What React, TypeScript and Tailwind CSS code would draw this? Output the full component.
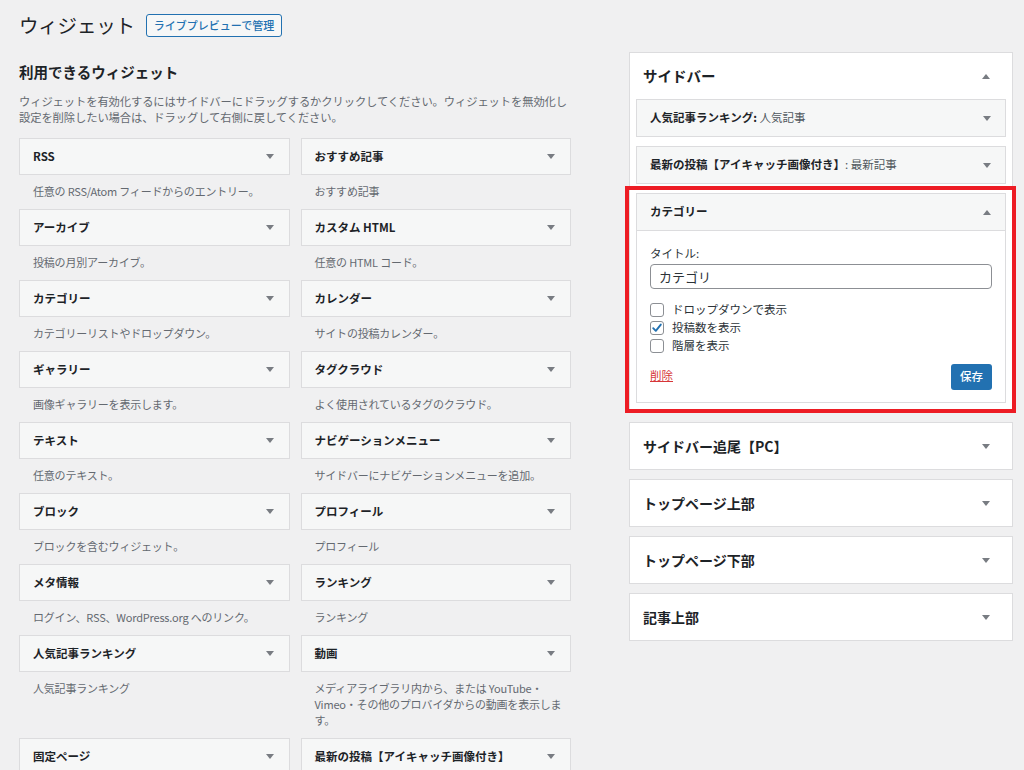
import React from 'react';

const FONT = { fontFamily: '"Noto Sans CJK JP", "Noto Sans", "Liberation Sans", sans-serif' };

const widgets: { title: string; desc: React.ReactNode }[][] = [
  [
    { title: 'RSS', desc: '任意の RSS/Atom フィードからのエントリー。' },
    { title: 'おすすめ記事', desc: 'おすすめ記事' },
  ],
  [
    { title: 'アーカイブ', desc: '投稿の月別アーカイブ。' },
    { title: 'カスタム HTML', desc: '任意の HTML コード。' },
  ],
  [
    { title: 'カテゴリー', desc: 'カテゴリーリストやドロップダウン。' },
    { title: 'カレンダー', desc: 'サイトの投稿カレンダー。' },
  ],
  [
    { title: 'ギャラリー', desc: '画像ギャラリーを表示します。' },
    { title: 'タグクラウド', desc: 'よく使用されているタグのクラウド。' },
  ],
  [
    { title: 'テキスト', desc: '任意のテキスト。' },
    { title: 'ナビゲーションメニュー', desc: 'サイドバーにナビゲーションメニューを追加。' },
  ],
  [
    { title: 'ブロック', desc: 'ブロックを含むウィジェット。' },
    { title: 'プロフィール', desc: 'プロフィール' },
  ],
  [
    { title: 'メタ情報', desc: 'ログイン、RSS、WordPress.org へのリンク。' },
    { title: 'ランキング', desc: 'ランキング' },
  ],
  [
    { title: '人気記事ランキング', desc: '人気記事ランキング' },
    {
      title: '動画',
      desc: (
        <>
          メディアライブラリ内から、または YouTube・
          <br />
          Vimeo・その他のプロバイダからの動画を表示しま
          <br />
          す。
        </>
      ),
    },
  ],
  [
    { title: '固定ページ', desc: '' },
    { title: '最新の投稿【アイキャッチ画像付き】', desc: '' },
  ],
];

const Arrow = ({ up = false }: { up?: boolean }) => (
  <svg width="8" height="5" viewBox="0 0 8 5" className="shrink-0">
    {up ? <path d="M0 5 L4 0 L8 5 Z" fill="#787c82" /> : <path d="M0 0 L8 0 L4 5 Z" fill="#787c82" />}
  </svg>
);

const Tile = ({ title, desc }: { title: string; desc: React.ReactNode }) => (
  <div>
    <div className="h-[37px] bg-[#f6f7f7] border border-[#dcdcde] flex items-center justify-between pl-[13px] pr-[15px]">
      <span className="text-[11.5px] font-bold text-[#1d2327]">{title}</span>
      <Arrow />
    </div>
    {desc !== '' && (
      <div className="pt-[8px] pb-[10px] pl-[14px] text-[11px] leading-[16px] text-[#646970] whitespace-nowrap tracking-[-0.2px]">
        {desc}
      </div>
    )}
  </div>
);

const SideWidget = ({ bold, rest }: { bold: string; rest?: string }) => (
  <div className="h-[38px] bg-[#f6f7f7] border border-[#dcdcde] flex items-center justify-between pl-[13px] pr-[14px]">
    <span className="text-[11.5px] text-[#1d2327]">
      <span className="font-bold">{bold}</span>
      {rest && <span className="text-[#50575e]">{rest}</span>}
    </span>
    <Arrow />
  </div>
);

const Area = ({ title }: { title: string }) => (
  <div className="h-[48px] bg-white border border-[#dcdcde] flex items-center justify-between pl-[13px] pr-[22px]">
    <span className="text-[14px] font-bold text-[#1d2327]">{title}</span>
    <Arrow />
  </div>
);

const Checkbox = ({ checked, label }: { checked?: boolean; label: string }) => (
  <label className="flex items-center gap-[8px] h-[18px]">
    <span className="w-[14px] h-[14px] rounded-[3px] border border-[#8c8f94] bg-white flex items-center justify-center">
      {checked && (
        <svg width="12" height="12" viewBox="0 0 12 12">
          <path d="M2.2 6.2 L4.8 8.8 L9.8 2.6" stroke="#2271b1" strokeWidth="1.9" fill="none" strokeLinecap="round" strokeLinejoin="round" />
        </svg>
      )}
    </span>
    <span className="text-[11.5px] text-[#2c3338]">{label}</span>
  </label>
);

export default function App() {
  return (
    <div className="w-[1024px] h-[770px] overflow-hidden bg-[#f0f0f1] pl-[19px]" style={FONT}>
      <div className="h-[52px] pt-[11px]">
        <div className="h-[28px] flex items-center gap-[11px]">
          <h1 className="text-[19.5px] font-normal text-[#1d2327] leading-[28px] tracking-[-0.2px]">ウィジェット</h1>
          <span className="h-[23px] px-[7px] flex items-center border border-[#2271b1] rounded-[3px] bg-[#f6f7f7] text-[11px] font-medium text-[#2271b1]">
            ライブプレビューで管理
          </span>
        </div>
      </div>

      <div className="flex items-start">
        <div className="w-[552px] shrink-0">
          <h2 className="mt-[10px] text-[14.5px] font-bold leading-[20px] text-[#1d2327]">利用できるウィジェット</h2>
          <p className="mt-[11px] text-[11.3px] leading-[16px] text-[#646970] whitespace-nowrap tracking-[-0.1px]">
            ウィジェットを有効化するにはサイドバーにドラッグするかクリックしてください。ウィジェットを無効化し
            <br />
            設定を削除したい場合は、ドラッグして右側に戻してください。
          </p>
          <div className="mt-[13px] grid grid-cols-2 gap-x-[11px] items-start">
            {widgets.flat().map((w, i) => (
              <Tile key={i} title={w.title} desc={w.desc} />
            ))}
          </div>
        </div>

        <div className="ml-[58px] w-[384px] shrink-0">
          <div className="bg-white border border-[#dcdcde] px-[6px] pb-[9px]">
            <div className="h-[46px] flex items-center justify-between pl-[7px] pr-[16px]">
              <span className="text-[14.5px] font-bold text-[#1d2327]">サイドバー</span>
              <Arrow up />
            </div>
            <div className="flex flex-col gap-[8px]">
              <SideWidget bold="人気記事ランキング:" rest=" 人気記事" />
              <div className="mt-[1px]">
                <SideWidget bold="最新の投稿【アイキャッチ画像付き】" rest=": 最新記事" />
              </div>
              <div className="relative mt-[1px]">
                <div className="border border-[#dcdcde]">
                  <div className="h-[37px] bg-[#f6f7f7] border-b border-[#dcdcde] flex items-center justify-between pl-[13px] pr-[14px]">
                    <span className="text-[11.5px] font-bold text-[#1d2327]">カテゴリー</span>
                    <Arrow up />
                  </div>
                  <div className="bg-white px-[13px] pt-[13px] pb-[12px]">
                    <div className="text-[11.5px] text-[#2c3338] leading-[18px]">タイトル:</div>
                    <div className="mt-[2px] h-[25px] border border-[#8c8f94] rounded-[4px] flex items-center pl-[8px] text-[13px] text-[#2c3338]">
                      カテゴリ
                    </div>
                    <div className="mt-[12px] flex flex-col">
                      <Checkbox label="ドロップダウンで表示" />
                      <Checkbox checked label="投稿数を表示" />
                      <Checkbox label="階層を表示" />
                    </div>
                    <div className="mt-[9px] flex items-start justify-between">
                      <span className="mt-[3px] text-[11.5px] text-[#d63638] underline">削除</span>
                      <span className="h-[26px] w-[41px] rounded-[3px] bg-[#2271b1] text-white text-[11.5px] font-medium flex items-center justify-center">
                        保存
                      </span>
                    </div>
                  </div>
                </div>
                <div className="absolute -left-[11px] -right-[10px] -top-[7px] -bottom-[10px] border-4 border-[#ed1c24] pointer-events-none" />
              </div>
            </div>
          </div>
          <div className="mt-[9px] flex flex-col gap-[9px]">
            <Area title="サイドバー追尾【PC】" />
            <Area title="トップページ上部" />
            <Area title="トップページ下部" />
            <Area title="記事上部" />
          </div>
        </div>
      </div>
    </div>
  );
}
